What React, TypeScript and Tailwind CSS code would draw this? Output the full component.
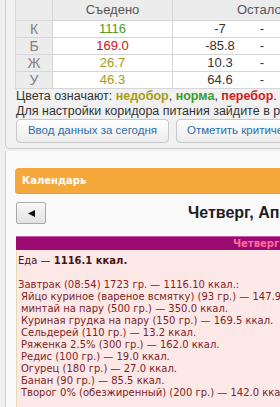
const rows = [
  { k: 'К', eaten: '1116', color: 'text-[#4f9b2b]', left: '-7' },
  { k: 'Б', eaten: '169.0', color: 'text-[#c8141c]', left: '-85.8' },
  { k: 'Ж', eaten: '26.7', color: 'text-[#a39a16]', left: '10.3' },
  { k: 'У', eaten: '46.3', color: 'text-[#a39a16]', left: '64.6' },
]

const foods = [
  'Яйцо куриное (вареное всмятку) (93 гр.) — 147.9 ккал.',
  'минтай на пару (500 гр.) — 350.0 ккал.',
  'Куриная грудка на пару (150 гр.) — 169.5 ккал.',
  'Сельдерей (110 гр.) — 13.2 ккал.',
  'Ряженка 2.5% (300 гр.) — 162.0 ккал.',
  'Редис (100 гр.) — 19.0 ккал.',
  'Огурец (180 гр.) — 27.0 ккал.',
  'Банан (90 гр.) — 85.5 ккал.',
  'Творог 0% (обезжиренный) (200 гр.) — 142.0 ккал.',
]

export default function App() {
  return (
    <div className="h-[407px] w-[280px] overflow-hidden bg-[#efefef] pl-[5px] font-['DejaVu_Sans',sans-serif] text-[#333]">
      {/* stats panel */}
      <div className="w-[400px] rounded-bl-[5px] border-b border-l border-[#cdcdcd] bg-[#f1f1f1] pb-[5px] pl-[9px] font-['Liberation_Sans',sans-serif]">
        <div className="border-l border-[#d6d6d6] text-[12px]">
          <div className="flex h-[21px] border-b border-[#d6d6d6] bg-[#ececec] text-[13px] text-[#555]">
            <div className="w-[37px] border-r border-[#d6d6d6]" />
            <div className="flex w-[120px] items-center justify-center border-r border-[#d6d6d6]">Съедено</div>
            <div className="flex items-center pl-[64px]">Осталось</div>
          </div>
          {rows.map((r) => (
            <div key={r.k} className="flex h-[17px] border-b border-[#d6d6d6] text-[13px]">
              <div className="flex w-[37px] items-center justify-center border-r border-[#d6d6d6] bg-[#ececec] text-[14px] text-[#808080]">
                {r.k}
              </div>
              <div className={`flex w-[120px] items-center justify-center border-r border-[#d6d6d6] bg-white ${r.color}`}>
                {r.eaten}
              </div>
              <div className="flex flex-1 items-center bg-white">
                <span className="ml-[9px] w-[76px] text-center">{r.left}</span>
                <span className="w-[8px] text-center">-</span>
              </div>
            </div>
          ))}
        </div>
        <div className="whitespace-nowrap pl-px text-[12.5px] leading-[15px]">
          <div>
            Цвета означают: <b className="text-[#a89c12]">недобор</b>, <b className="text-[#3f9a2a]">норма</b>,{' '}
            <b className="text-[#d0201c]">перебор</b>.
          </div>
          <div>Для настройки коридора питания зайдите в раздел</div>
        </div>
        <div className="flex gap-[7px] pl-px">
          <button className="h-[24px] w-[153px] whitespace-nowrap rounded-[4px] border border-[#c9c9c9] bg-gradient-to-b from-white to-[#ececec] text-[11.5px] text-[#2e6da6]">
            Ввод данных за сегодня
          </button>
          <button className="h-[24px] w-[200px] whitespace-nowrap rounded-[4px] border border-[#c9c9c9] bg-gradient-to-b from-white to-[#ececec] pl-[10px] text-left text-[11.5px] text-[#2e6da6]">
            Отметить критические дни
          </button>
        </div>
      </div>

      {/* calendar panel */}
      <div className="mt-[2px] h-[300px] w-[400px] border-l border-[#cdcdcd] bg-[#fafafa] pl-[9px] pt-[17px]">
        <div className="flex h-[26px] items-center rounded-l-[4px] border-b border-[#e39a2c] bg-[#f5a93b] pl-[7px] text-[10px] font-bold text-white">
          Календарь
        </div>
        <div className="mt-[8px] flex h-[22px] items-center">
          <button className="ml-px flex h-[22px] w-[30px] items-center justify-center rounded-[2px] border border-[#a9a9a9] bg-gradient-to-b from-[#f8f8f8] to-[#e2e2e2]">
            <svg width="7" height="7" viewBox="0 0 7 7">
              <polygon points="0,3.5 7,0 7,7" fill="#111" />
            </svg>
          </button>
          <div className="ml-[142px] whitespace-nowrap font-['Liberation_Sans',sans-serif] text-[16px] font-bold text-[#1e1e1e]">
            Четверг, Апреля 2014
          </div>
        </div>
        <div className="ml-px mt-[12px]">
          <div className="flex h-[14px] items-center border-t border-[#c65aa2] bg-[#9c0b72] pl-[217px] text-[10px] font-bold text-[#ff6b9c]">
            Четверг
          </div>
          <div className="h-[200px] whitespace-nowrap border-l border-[#e6d9b3] bg-[#fde8e8] pt-[5px] text-[10px] leading-[12px]">
            <div className="pl-px text-[#441515]">
              Еда — <b>1116.1 ккал.</b>
            </div>
            <div className="h-[12px]" />
            <div className="pl-px text-[#8a1d1d]">Завтрак (08:54) 1723 гр. — 1116.10 ккал.:</div>
            {foods.map((f) => (
              <div key={f} className="pl-[4px] text-[#7e2424]">
                {f}
              </div>
            ))}
          </div>
        </div>
      </div>
    </div>
  )
}
